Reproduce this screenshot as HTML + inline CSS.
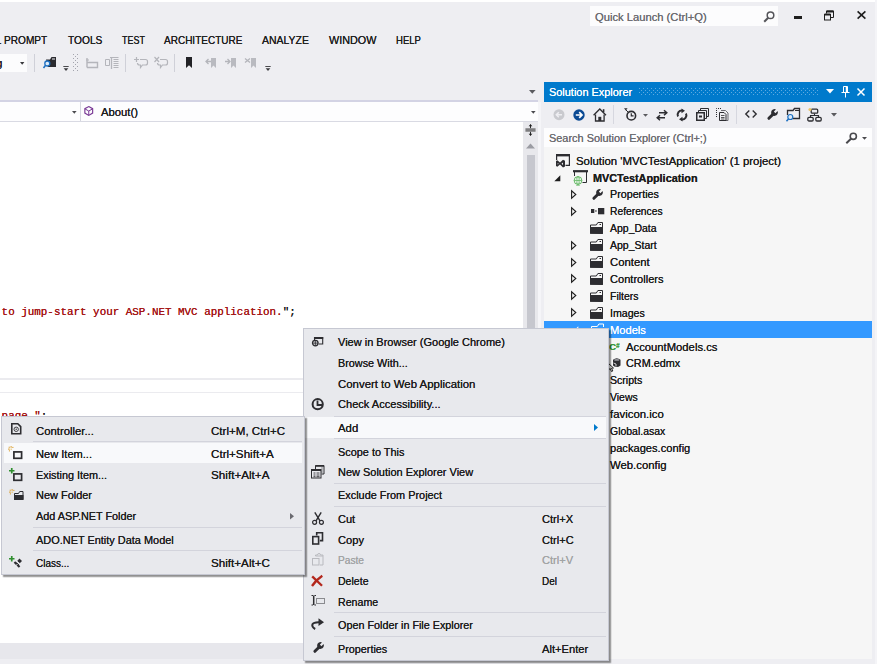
<!DOCTYPE html>
<html>
<head>
<meta charset="utf-8">
<title>MVCTestApplication - Microsoft Visual Studio</title>
<style>
html,body{margin:0;padding:0;}
body{width:879px;height:666px;overflow:hidden;background:#eeeef2;position:relative;
 font-family:"Liberation Sans",sans-serif;font-size:12px;color:#1e1e1e;}
.abs{position:absolute;}
.t{position:absolute;white-space:pre;line-height:16px;height:16px;font-size:11px;transform-origin:0 50%;text-shadow:0 0 0.400px currentColor;}
svg{position:absolute;overflow:visible;}
.mb{color:#1e1e1e;}
.tr{color:#1e1e1e;}
.menu{position:absolute;background:#e8e9ed;border:1px solid #c6c8d2;box-shadow:2.200px 2.200px 1.200px rgba(0,0,0,.43);box-sizing:border-box;}
.mi{color:#1e1e1e;}
.sep{position:absolute;height:1px;background:#d3d4dc;}
.hl{position:absolute;background:#f8f9fb;}
</style>
</head>
<body>

<!-- ===== top chrome ===== -->
<div class="abs" style="left:589.5px;top:6px;width:188px;height:20px;background:#fcfcfd;"></div>
<svg style="left:762.500px;top:10.500px" width="12" height="12" viewBox="0 0 12 12"><circle cx="7.500" cy="4.300" r="3.300" fill="none" stroke="#55555a" stroke-width="1.500"/><path d="M5.200 6.700 L1.200 10.800" stroke="#55555a" stroke-width="2"/></svg>
<div class="abs" style="left:793.500px;top:15.500px;width:8.500px;height:3px;background:#1e1e1e;"></div>
<svg style="left:823px;top:9.500px" width="12" height="12" viewBox="0 0 12 12"><path d="M3.5 3.5V1h7v6.5H8" fill="none" stroke="#1e1e1e" stroke-width="1"/><path d="M3.5 1.5h7" stroke="#1e1e1e" stroke-width="2"/><rect x="1.5" y="4.5" width="6" height="5.5" fill="none" stroke="#1e1e1e" stroke-width="1"/><path d="M1.5 4.5h6" stroke="#1e1e1e" stroke-width="2"/></svg>
<svg style="left:857px;top:11px" width="9" height="8" viewBox="0 0 9 8"><path d="M0.600 0.300l7.800 7.400M8.400 0.300l-7.800 7.400" stroke="#1e1e1e" stroke-width="1.600"/></svg>

<!-- toolbar -->
<div class="abs" style="left:0;top:54px;width:27px;height:18px;background:#fcfcfd;"></div>
<svg style="left:19.500px;top:62px" width="5" height="3"><path d="M0 0h4.400L2.200 2.800z" fill="#3a3a3e"/></svg>
<div class="abs" style="left:34px;top:54px;width:1px;height:18px;background:#cfd0d8;"></div>
<!-- find in files -->
<svg style="left:43px;top:56px" width="14" height="13" viewBox="0 0 14 13"><path d="M3 3.500h4l1.500-2.500h4.500v10h-8z" fill="#2b2b30"/><path d="M9 3h3" stroke="#eeeef2" stroke-width="1"/><circle cx="4.300" cy="7.500" r="2.500" fill="#dceaf8" stroke="#1d6fc0" stroke-width="1.300"/><path d="M2.600 9.300L0.500 12" stroke="#1d6fc0" stroke-width="1.600"/></svg>
<svg style="left:63px;top:65.500px" width="6" height="6" viewBox="0 0 6 6"><path d="M0.300 0.500h5.400" stroke="#4a4a4e" stroke-width="1"/><path d="M0.700 2.300h4.600L3 5z" fill="#3a3a3e"/></svg>
<svg style="left:73px;top:54px" width="5" height="18" viewBox="0 0 5 18"><g fill="#a3a4ad"><rect x="0" y="0" width="1" height="1"/><rect x="4" y="0" width="1" height="1"/><rect x="2" y="2" width="1" height="1"/><rect x="0" y="4" width="1" height="1"/><rect x="4" y="4" width="1" height="1"/><rect x="2" y="6" width="1" height="1"/><rect x="0" y="8" width="1" height="1"/><rect x="4" y="8" width="1" height="1"/><rect x="2" y="10" width="1" height="1"/><rect x="0" y="12" width="1" height="1"/><rect x="4" y="12" width="1" height="1"/><rect x="2" y="14" width="1" height="1"/><rect x="0" y="16" width="1" height="1"/><rect x="4" y="16" width="1" height="1"/></g></svg>
<!-- disabled icons -->
<svg style="left:86px;top:58px" width="12" height="10" viewBox="0 0 12 10"><path d="M1 0v9.500M1 4.500h10.500v5H1" fill="none" stroke="#b4b5bb" stroke-width="1.400"/><path d="M0 2h3" stroke="#b4b5bb" stroke-width="1"/></svg>
<svg style="left:105px;top:57px" width="14" height="12" viewBox="0 0 14 12"><path d="M0.500 2.500h4v6h-4z" fill="none" stroke="#b4b5bb" stroke-width="1"/><path d="M6.500 0v12" stroke="#b4b5bb" stroke-width="1.300"/><path d="M5 0.500h8.500M8.500 2.500h5M8.500 4.500h5M8.500 6.500h5M8.500 8.500h5M8.500 10.500h5" stroke="#b4b5bb" stroke-width="1"/></svg>
<div class="abs" style="left:125px;top:54px;width:1px;height:18px;background:#cfd0d8;"></div>
<svg style="left:134px;top:57px" width="14" height="12" viewBox="0 0 14 12"><path d="M2.500 0v5M0 2.500h5" stroke="#b4b5bb" stroke-width="1.200"/><path d="M6 2.500h5.500q2 0 2 2v1.500q0 2-2 2h-3l-2 2.500v-2.500h-1q-2 0-2-2" fill="none" stroke="#b4b5bb" stroke-width="1.200"/></svg>
<svg style="left:154px;top:57px" width="14" height="12" viewBox="0 0 14 12"><path d="M0.500 0l4.500 5M5 0L0.500 5" stroke="#b4b5bb" stroke-width="1.200"/><path d="M6 2.500h5.500q2 0 2 2v1.500q0 2-2 2h-3l-2 2.500v-2.500h-1q-2 0-2-2" fill="none" stroke="#b4b5bb" stroke-width="1.200"/></svg>
<div class="abs" style="left:174px;top:54px;width:1px;height:18px;background:#cfd0d8;"></div>
<svg style="left:186px;top:57px" width="6" height="11" viewBox="0 0 6 11"><path d="M0 0h6v11L3 8.300L0 11z" fill="#222226"/></svg>
<svg style="left:205px;top:57px" width="11" height="11" viewBox="0 0 11 11"><path d="M6 1h5v10l-2.500-2.500L6 11z" fill="#b9bac0"/><path d="M6 4.500H1M3.500 2L1 4.500L3.500 7" fill="none" stroke="#b4b5bb" stroke-width="1.300"/></svg>
<svg style="left:225px;top:57px" width="11" height="11" viewBox="0 0 11 11"><path d="M6 1h5v10l-2.500-2.500L6 11z" fill="#b9bac0"/><path d="M0 4.500H5M2.500 2L5 4.500L2.500 7" fill="none" stroke="#b4b5bb" stroke-width="1.300"/></svg>
<svg style="left:245px;top:57px" width="11" height="11" viewBox="0 0 11 11"><path d="M6 1h5v10l-2.500-2.500L6 11z" fill="#b9bac0"/><path d="M0 1.500L5 5.500M0 5.500L5 1.500" fill="none" stroke="#b4b5bb" stroke-width="1.300"/></svg>
<svg style="left:265px;top:66px" width="6" height="6" viewBox="0 0 6 6"><path d="M0.300 0.500h5.400" stroke="#4a4a4e" stroke-width="1"/><path d="M0.700 2.300h4.600L3 5z" fill="#3a3a3e"/></svg>

<!-- editor nav bar -->
<div class="abs" style="left:0;top:100px;width:538px;height:2px;background:#d3d3e4;"></div>
<div class="abs" style="left:0;top:102px;width:538px;height:19px;background:#fdfdfe;"></div>
<div class="abs" style="left:0;top:121px;width:538px;height:1px;background:#d9dae3;"></div>
<div class="abs" style="left:80px;top:102px;width:1px;height:19px;background:#d6d7e0;"></div>
<svg style="left:72.300px;top:111px" width="5" height="3"><path d="M0 0h4.600L2.300 2.800z" fill="#4a4a4e"/></svg>
<svg style="left:530.600px;top:111.200px" width="5" height="3"><path d="M0 0h4.600L2.300 2.800z" fill="#4a4a4e"/></svg>
<svg style="left:528.500px;top:90px" width="7" height="4"><path d="M0 0h6.600L3.300 3.800z" fill="#5a5a5e"/></svg>
<svg style="left:84px;top:105.500px" width="9.500" height="10" viewBox="0 0 9.500 10"><path d="M4.750 0.600l3.900 2.100v4.400L4.750 9.400 0.850 7.100v-4.400z" fill="none" stroke="#7a3a96" stroke-width="1.150"/><path d="M1 2.900L4.750 5l3.750-2.100M4.750 5v4.200" fill="none" stroke="#7a3a96" stroke-width="1"/></svg>

<!-- editor -->
<div class="abs" style="left:0;top:122px;width:523px;height:521px;background:#ffffff;"></div>
<div class="abs" style="left:523px;top:122px;width:15px;height:521px;background:#e8e8ec;"></div>
<div class="abs" style="left:538px;top:102px;width:3px;height:542px;background:#f5f5f8;"></div>
<div class="abs" style="left:527.300px;top:154.500px;width:7.700px;height:480px;background:#c6c7ce;"></div>
<svg style="left:526px;top:143px" width="10" height="6"><path d="M0 5.500L4.500 0.500L9 5.500z" fill="#9b9ca3"/></svg>
<svg style="left:525px;top:124.300px" width="11" height="12" viewBox="0 0 11 13"><path d="M0 5.500h11M0 7.500h11" stroke="#1e1e1e" stroke-width="1"/><path d="M5.500 0.500v4M5.500 8.500v4" stroke="#1e1e1e" stroke-width="1"/><path d="M3.500 2.500L5.500 0.300L7.500 2.500zM3.500 10.500L5.500 12.700L7.500 10.500z" fill="#1e1e1e"/></svg>
<div class="abs" style="left:0;top:643px;width:544px;height:16px;background:#e7e7ec;"></div>
<div class="abs" style="left:0;top:378px;width:523px;height:1.500px;background:#ebebef;"></div>
<div class="abs" style="left:0;top:391.500px;width:523px;height:1.500px;background:#ebebef;"></div>
<div class="t" id="code1" style="left:1.600px;top:304.300px;font-family:'Liberation Mono',monospace;font-size:10.900px;color:#a31515;">to jump-start your ASP.NET MVC application.<span style="color:#1e1e1e">";</span></div>
<div class="t" id="code2" style="left:1.600px;top:408.300px;font-family:'Liberation Mono',monospace;font-size:10.900px;color:#a31515;">page."<span style="color:#1e1e1e">;</span></div>

<!-- ===== Solution Explorer ===== -->
<div class="abs" style="left:544px;top:82px;width:328px;height:20px;background:#007acc;"></div>
<svg style="left:639px;top:88px" width="180" height="7"><defs><pattern id="dp" width="4" height="4" patternUnits="userSpaceOnUse"><rect x="0" y="0" width="1" height="1" fill="#5eaae0"/><rect x="2" y="2" width="1" height="1" fill="#5eaae0"/></pattern></defs><rect width="180" height="7" fill="url(#dp)"/></svg>
<svg style="left:826px;top:89px" width="9" height="6"><path d="M0 0h8L4 4.500z" fill="#fff"/></svg>
<svg style="left:841px;top:86px" width="9" height="12" viewBox="0 0 9 12"><path d="M2.500 0.500h4v6h-4zM0.500 6.500h8M4.500 6.500v5" fill="none" stroke="#fff" stroke-width="1"/><path d="M5.500 0.500v6" stroke="#fff" stroke-width="1.500"/></svg>
<svg style="left:857px;top:88px" width="8" height="8" viewBox="0 0 8 8"><path d="M0.500 0.500l7 7M7.500 0.500l-7 7" stroke="#fff" stroke-width="1.500"/></svg>
<div class="abs" style="left:544px;top:128px;width:328px;height:19px;background:#fdfdfe;"></div>
<div class="abs" style="left:544px;top:147px;width:328px;height:512px;background:#f6f6f6;"></div>
<div class="abs" style="left:544px;top:320.800px;width:328px;height:17.700px;background:#3399ff;"></div>
<svg style="left:845px;top:132px" width="13" height="12" viewBox="0 0 13 12"><circle cx="8.300" cy="4.300" r="3.100" fill="none" stroke="#4a4a4e" stroke-width="1.600"/><path d="M6 6.700L1.300 11.200" stroke="#4a4a4e" stroke-width="2"/></svg>
<svg style="left:862px;top:137px" width="5" height="3"><path d="M0 0h5L2.500 2.800z" fill="#4a4a4e"/></svg>
<svg style="left:552.5px;top:108.8px" width="12" height="12" viewBox="0 0 12 12"><circle cx="6" cy="5.700" r="5.500" fill="#c9cacf"/><path d="M9 5.700H3.500M5.800 3.200L3.300 5.700L5.800 8.200" fill="none" stroke="#eeeef2" stroke-width="1.500"/></svg>
<svg style="left:573px;top:108.6px" width="12" height="12" viewBox="0 0 12 12"><circle cx="6" cy="6" r="5.700" fill="#0b4a94"/><path d="M2.800 6H8.800M6.200 3.200L9 6L6.200 8.800" fill="none" stroke="#fff" stroke-width="1.700"/></svg>
<svg style="left:593px;top:108px" width="14" height="14" viewBox="0 0 14 14"><path d="M0.600 7.300L6.800 1L13 7.300" fill="none" stroke="#2d2d31" stroke-width="1.300"/><path d="M2.500 6.500V13h8.600V6.500" fill="none" stroke="#2d2d31" stroke-width="1.300"/><rect x="5.300" y="8.800" width="3" height="4.200" fill="#2d2d31"/><rect x="9.800" y="1.200" width="1.600" height="3" fill="#2d2d31"/></svg>
<div class="abs" style="left:613px;top:105px;width:1px;height:19px;background:#d6d7df;"></div>
<svg style="left:623.5px;top:108px" width="13" height="13" viewBox="0 0 13 13"><circle cx="7.300" cy="7.700" r="4.300" fill="none" stroke="#2d2d31" stroke-width="1.600"/><path d="M7.300 5.300V7.900H9.600" fill="none" stroke="#2d2d31" stroke-width="1.200"/><path d="M0 0.300h3.600L1.800 2.600z" fill="#2d2d31"/><path d="M2 2L4 4" stroke="#2d2d31" stroke-width="1"/></svg>
<svg style="left:643px;top:114px" width="5" height="3" viewBox="0 0 5 3"><path d="M0 0h5L2.500 2.800z" fill="#5a5a5e"/></svg>
<svg style="left:655.5px;top:109.5px" width="12" height="11" viewBox="0 0 12 11"><path d="M3 2.800H11M8 0.300L10.800 2.800L8 5.300" fill="none" stroke="#2d2d31" stroke-width="1.500"/><path d="M9 7.800H1M4 5.300L1.200 7.800L4 10.300" fill="none" stroke="#2d2d31" stroke-width="1.500"/></svg>
<svg style="left:675.5px;top:109px" width="12" height="12" viewBox="0 0 12 12"><path d="M2 7.500A4.200 4.200 0 0 1 6.500 1.600" fill="none" stroke="#2d2d31" stroke-width="2"/><path d="M5.500 -0.500L9 1.800L5.500 4.200z" fill="#2d2d31"/><path d="M10 4.500A4.200 4.200 0 0 1 5.500 10.400" fill="none" stroke="#2d2d31" stroke-width="2"/><path d="M6.500 12.500L3 10.200L6.500 7.800z" fill="#2d2d31"/></svg>
<svg style="left:696.4px;top:108px" width="13" height="13" viewBox="0 0 13 13"><path d="M4.500 2.500V0.500h8v8h-2" fill="none" stroke="#2d2d31" stroke-width="1"/><path d="M2.500 4.500V2.500h8v8h-2" fill="none" stroke="#2d2d31" stroke-width="1"/><rect x="0.750" y="4.750" width="7.500" height="7.500" fill="none" stroke="#2d2d31" stroke-width="1.500"/><rect x="3" y="7.500" width="3" height="2" fill="#2d2d31"/></svg>
<svg style="left:716.4px;top:108px" width="13" height="13" viewBox="0 0 13 13"><path d="M0.500 9V0.500H6" fill="none" stroke="#2d2d31" stroke-width="1" stroke-dasharray="1 1"/><path d="M5 2.500h4.500l2.500 2.500v7.500h-7" fill="none" stroke="#6a6a70" stroke-width="1"/><path d="M3.500 4.500h4.500l2 2v6h-6.500z" fill="#eeeef2" stroke="#2d2d31" stroke-width="1"/><path d="M5 7.500h3.500M5 9.500h3.500M5 11h3.500" stroke="#2d2d31" stroke-width="0.800"/></svg>
<div class="abs" style="left:736px;top:105px;width:1px;height:19px;background:#d6d7df;"></div>
<svg style="left:745px;top:110.4px" width="12" height="8" viewBox="0 0 12 8"><path d="M4.300 0.500L0.800 4L4.300 7.500M7.700 0.500L11.200 4L7.700 7.500" fill="none" stroke="#2d2d31" stroke-width="1.400"/></svg>
<svg style="left:766.5px;top:109px" width="11" height="11" viewBox="0 0 11 11"><g transform="scale(1)"><path d="M1.900 9.300L6 5.200" stroke="#2d2d31" stroke-width="3" stroke-linecap="round"/><path d="M10.550 2A3.400 3.400 0 1 1 9 0.450L6.860 2.580L8.420 4.140z" fill="#2d2d31"/></g></svg>
<svg style="left:785.5px;top:108px" width="14" height="14" viewBox="0 0 14 14"><path d="M1.500 7V2.500h5.500l1.500-2h5v10h-7" fill="none" stroke="#2d2d31" stroke-width="1.300"/><path d="M9 2.500h4" stroke="#2d2d31" stroke-width="1"/><circle cx="4.300" cy="9" r="2.500" fill="#dceaf8" stroke="#1d6fc0" stroke-width="1.200"/><path d="M2.600 10.800L0.500 13.300" stroke="#1d6fc0" stroke-width="1.500"/></svg>
<svg style="left:806.5px;top:108px" width="15" height="14" viewBox="0 0 15 14"><rect x="4.200" y="1.200" width="6.500" height="4" rx="1" fill="none" stroke="#2d2d31" stroke-width="1.300"/><rect x="0.800" y="9.300" width="5.400" height="3.700" rx="1.200" fill="none" stroke="#2d2d31" stroke-width="1.300"/><rect x="8.800" y="9.300" width="5.400" height="3.700" rx="1.200" fill="none" stroke="#2d2d31" stroke-width="1.300"/><path d="M7.500 5.500V7.500M3.500 9.300V7.500h8V9.300" fill="none" stroke="#2d2d31" stroke-width="1.100"/><circle cx="3" cy="1.500" r="1.600" fill="#e8c468"/></svg>
<svg style="left:831px;top:113.3px" width="6" height="4" viewBox="0 0 6 4"><path d="M0 0h6L3 3.400z" fill="#5a5a5e"/></svg>
<svg style="left:556px;top:154.05px" width="14" height="13" viewBox="0 0 14 13"><path d="M0.600 6V0.500h12.800V11.400H9.500" fill="none" stroke="#2d2d31" stroke-width="1.200"/><path d="M0 1.200h14" stroke="#2d2d31" stroke-width="2.400"/><path d="M0 7l1.300-0.800L4 8.600L7 5.800l2 0.900v5.800L7 13.400L4 10.600L1.300 12.800L0 12zM1.700 8.900v1.600l1-0.800zM7 8.400l-1.500 1.300L7 11z" fill="#2d2d31" fill-rule="evenodd"/></svg>
<svg style="left:554px;top:175.056px" width="7" height="7" viewBox="0 0 7 7"><path d="M6.300 0.300V6.300H0.300z" fill="#1e1e1e"/></svg>
<svg style="left:572.5px;top:170.056px" width="15" height="16" viewBox="0 0 15 16"><path d="M0 1.200h15" stroke="#2d2d31" stroke-width="2.200"/><path d="M1.500 2v4M13.500 2v10.500H9.500" fill="none" stroke="#2d2d31" stroke-width="1"/><circle cx="5" cy="10.500" r="3.900" fill="#ffffff" stroke="#55b055" stroke-width="0.900"/><path d="M1.100 10.500h7.800M5 6.600v7.800" stroke="#55b055" stroke-width="0.700"/><ellipse cx="5" cy="10.500" rx="1.900" ry="3.900" fill="none" stroke="#55b055" stroke-width="0.600"/><path d="M3.200 15.300h3.600" stroke="#55b055" stroke-width="0.700"/></svg>
<svg style="left:571px;top:189.962px" width="6" height="9" viewBox="0 0 6 9"><path d="M0.600 0.800V8.200L4.800 4.500z" fill="#f6f6f6" stroke="#1e1e1e" stroke-width="1.100"/></svg>
<svg style="left:592px;top:188.862px" width="11" height="11" viewBox="0 0 11 11"><g transform="scale(1)"><path d="M1.900 9.300L6 5.200" stroke="#2d2d31" stroke-width="3" stroke-linecap="round"/><path d="M10.550 2A3.400 3.400 0 1 1 9 0.450L6.860 2.580L8.420 4.140z" fill="#2d2d31"/></g></svg>
<svg style="left:571px;top:206.868px" width="6" height="9" viewBox="0 0 6 9"><path d="M0.600 0.800V8.200L4.800 4.500z" fill="#f6f6f6" stroke="#1e1e1e" stroke-width="1.100"/></svg>
<svg style="left:590.5px;top:207.968px" width="13.5" height="7" viewBox="0 0 13.5 7"><rect x="0" y="1" width="3.300" height="4" fill="#2d2d31"/><rect x="4" y="2.500" width="1.800" height="1" fill="#2d2d31"/><rect x="7" y="0" width="6.300" height="6.300" fill="#2d2d31"/></svg>
<svg style="left:590.3px;top:222.274px" width="13" height="12" viewBox="0 0 13 12"><path d="M0.5 11V3h5.800l1.600-2.500h4.600V11.500z" fill="none" stroke="#2d2d31" stroke-width="1"/><rect x="0" y="5" width="13" height="6.800" fill="#2d2d31"/><path d="M9.500 2.500h1.500" stroke="#2d2d31" stroke-width="1"/></svg>
<svg style="left:590.3px;top:239.18px" width="13" height="12" viewBox="0 0 13 12"><path d="M0.5 11V3h5.800l1.600-2.500h4.600V11.500z" fill="none" stroke="#2d2d31" stroke-width="1"/><rect x="0" y="5" width="13" height="6.800" fill="#2d2d31"/><path d="M9.500 2.500h1.500" stroke="#2d2d31" stroke-width="1"/></svg>
<svg style="left:571px;top:240.68px" width="6" height="9" viewBox="0 0 6 9"><path d="M0.600 0.800V8.200L4.800 4.500z" fill="#f6f6f6" stroke="#1e1e1e" stroke-width="1.100"/></svg>
<svg style="left:590.3px;top:256.086px" width="13" height="12" viewBox="0 0 13 12"><path d="M0.5 11V3h5.800l1.600-2.500h4.600V11.500z" fill="none" stroke="#2d2d31" stroke-width="1"/><rect x="0" y="5" width="13" height="6.800" fill="#2d2d31"/><path d="M9.500 2.500h1.500" stroke="#2d2d31" stroke-width="1"/></svg>
<svg style="left:571px;top:257.586px" width="6" height="9" viewBox="0 0 6 9"><path d="M0.600 0.800V8.200L4.800 4.500z" fill="#f6f6f6" stroke="#1e1e1e" stroke-width="1.100"/></svg>
<svg style="left:590.3px;top:272.992px" width="13" height="12" viewBox="0 0 13 12"><path d="M0.5 11V3h5.800l1.600-2.500h4.600V11.500z" fill="none" stroke="#2d2d31" stroke-width="1"/><rect x="0" y="5" width="13" height="6.800" fill="#2d2d31"/><path d="M9.500 2.500h1.500" stroke="#2d2d31" stroke-width="1"/></svg>
<svg style="left:571px;top:274.492px" width="6" height="9" viewBox="0 0 6 9"><path d="M0.600 0.800V8.200L4.800 4.500z" fill="#f6f6f6" stroke="#1e1e1e" stroke-width="1.100"/></svg>
<svg style="left:590.3px;top:289.898px" width="13" height="12" viewBox="0 0 13 12"><path d="M0.5 11V3h5.800l1.600-2.500h4.600V11.500z" fill="none" stroke="#2d2d31" stroke-width="1"/><rect x="0" y="5" width="13" height="6.800" fill="#2d2d31"/><path d="M9.500 2.500h1.500" stroke="#2d2d31" stroke-width="1"/></svg>
<svg style="left:571px;top:291.398px" width="6" height="9" viewBox="0 0 6 9"><path d="M0.600 0.800V8.200L4.800 4.500z" fill="#f6f6f6" stroke="#1e1e1e" stroke-width="1.100"/></svg>
<svg style="left:590.3px;top:306.804px" width="13" height="12" viewBox="0 0 13 12"><path d="M0.5 11V3h5.800l1.600-2.500h4.600V11.500z" fill="none" stroke="#2d2d31" stroke-width="1"/><rect x="0" y="5" width="13" height="6.800" fill="#2d2d31"/><path d="M9.500 2.500h1.500" stroke="#2d2d31" stroke-width="1"/></svg>
<svg style="left:571px;top:308.304px" width="6" height="9" viewBox="0 0 6 9"><path d="M0.600 0.800V8.200L4.800 4.500z" fill="#f6f6f6" stroke="#1e1e1e" stroke-width="1.100"/></svg>
<svg style="left:590.5px;top:323.01px" width="14" height="12" viewBox="0 0 14 12"><path d="M0.500 11V3.500h5.800l1.600-2.500h4.600V4" fill="none" stroke="#fff" stroke-width="1"/><path d="M0.500 11.500L3 5h11l-2.500 6.500z" fill="#fff"/></svg>
<svg style="left:571.5px;top:326.21px" width="7" height="7" viewBox="0 0 7 7"><path d="M6.300 0.300V6.300H0.300z" fill="#fff"/></svg>
<svg style="left:613px;top:357.522px" width="8" height="9.5" viewBox="0 0 8 9.5"><path d="M0 1.800Q3.750 -1.200 7.500 1.800V7.500Q3.750 10.500 0 7.500z" fill="#2d2d31"/><ellipse cx="3.750" cy="1.900" rx="2.700" ry="0.900" fill="#9a9aa0"/><path d="M0.500 5l2.500 1v2.500" fill="none" stroke="#f6f6f6" stroke-width="0.800"/></svg>
<svg style="left:607.5px;top:362.5px" width="6" height="9" viewBox="0 0 6 9"><path d="M0.500 0.500V7L2.200 5.500L3.500 8.500L4.800 8L3.500 5L5.500 5z" fill="#fff" stroke="#111" stroke-width="0.900"/></svg>
<div class="t" style="left:609.300px;top:338.700px;font-size:9.500px;font-weight:bold;color:#3c9a3c;">C<span style="font-size:6.500px;position:relative;top:-1.800px;left:-0.300px;">#</span></div>

<div class="t mb" style="left:-4.6px;top:31.9px;transform:scaleX(1.045);">L</div>
<div class="t mb" style="left:4.4px;top:31.9px;transform:scaleX(0.918);">PROMPT</div>
<div class="t mb" style="left:67.9px;top:31.9px;transform:scaleX(0.927);">TOOLS</div>
<div class="t mb" style="left:121.9px;top:31.9px;transform:scaleX(0.814);">TEST</div>
<div class="t mb" style="left:164.4px;top:31.9px;transform:scaleX(0.910);">ARCHITECTURE</div>
<div class="t mb" style="left:262.4px;top:31.9px;transform:scaleX(0.951);">ANALYZE</div>
<div class="t mb" style="left:328.9px;top:31.9px;transform:scaleX(0.982);">WINDOW</div>
<div class="t mb" style="left:395.9px;top:31.9px;transform:scaleX(0.866);">HELP</div>
<div class="t" style="left:594.6px;top:8.8px;transform:scaleX(1.018);color:#6d6d72;">Quick Launch (Ctrl+Q)</div>
<div class="t" style="left:-3.6px;top:54.6px;transform:scaleX(1.045);">g</div>
<div class="t" style="left:101.1px;top:103.9px;transform:scaleX(1.026);">About()</div>
<div class="t" style="left:548.6px;top:84.1px;transform:scaleX(0.993);color:#fff;">Solution Explorer</div>
<div class="t" style="left:549.0px;top:130.1px;transform:scaleX(0.993);color:#6d6d72;">Search Solution Explorer (Ctrl+;)</div>
<div class="t tr" style="left:575.5px;top:152.5px;transform:scaleX(1.035);">Solution 'MVCTestApplication' (1 project)</div>
<div class="t tr" style="left:592.6px;top:169.5px;transform:scaleX(0.985);font-weight:bold;text-shadow:0 0 0.300px currentColor;">MVCTestApplication</div>
<div class="t tr" style="left:609.6px;top:186.4px;transform:scaleX(0.975);">Properties</div>
<div class="t tr" style="left:609.6px;top:203.3px;transform:scaleX(0.935);">References</div>
<div class="t tr" style="left:609.6px;top:220.2px;transform:scaleX(0.952);">App_Data</div>
<div class="t tr" style="left:609.6px;top:237.1px;transform:scaleX(0.955);">App_Start</div>
<div class="t tr" style="left:609.6px;top:254.0px;transform:scaleX(1.028);">Content</div>
<div class="t tr" style="left:609.6px;top:270.9px;transform:scaleX(1.008);">Controllers</div>
<div class="t tr" style="left:609.6px;top:287.8px;transform:scaleX(0.951);">Filters</div>
<div class="t tr" style="left:609.6px;top:304.7px;transform:scaleX(0.965);">Images</div>
<div class="t tr" style="left:609.5px;top:321.6px;transform:scaleX(1.012);color:#fff;">Models</div>
<div class="t tr" style="left:626.4px;top:338.5px;transform:scaleX(1.024);">AccountModels.cs</div>
<div class="t tr" style="left:626.4px;top:355.4px;transform:scaleX(0.985);">CRM.edmx</div>
<div class="t tr" style="left:609.5px;top:372.3px;transform:scaleX(0.961);">Scripts</div>
<div class="t tr" style="left:609.5px;top:389.2px;transform:scaleX(0.950);">Views</div>
<div class="t tr" style="left:609.5px;top:406.1px;transform:scaleX(1.035);">favicon.ico</div>
<div class="t tr" style="left:609.5px;top:423.0px;transform:scaleX(0.952);">Global.asax</div>
<div class="t tr" style="left:609.5px;top:440.0px;transform:scaleX(1.010);">packages.config</div>
<div class="t tr" style="left:609.5px;top:456.9px;transform:scaleX(1.030);">Web.config</div>

<!-- ===== context menu ===== -->
<div class="menu" style="left:302.800px;top:328px;width:306px;height:332.700px;"></div>
<div class="hl" style="left:305px;top:417px;width:301px;height:21px;"></div>
<div class="sep" style="left:334px;top:416px;width:272px;"></div>
<div class="sep" style="left:334px;top:438px;width:272px;"></div>
<div class="sep" style="left:334px;top:483px;width:272px;"></div>
<div class="sep" style="left:334px;top:506px;width:272px;"></div>
<div class="sep" style="left:334px;top:612px;width:272px;"></div>
<div class="sep" style="left:334px;top:636px;width:272px;"></div>
<svg style="left:594px;top:424px" width="4" height="7"><path d="M0 0L4 3.500L0 7z" fill="#007acc"/></svg>
<svg style="left:312px;top:336.5px" width="12" height="10" viewBox="0 0 12 10"><path d="M2.500 3V0.500h8.200v6.500H7" fill="none" stroke="#2d2d31" stroke-width="1.100"/><path d="M2 1h9.200" stroke="#2d2d31" stroke-width="2"/><circle cx="3.300" cy="6.100" r="2.800" fill="#e8e9ed" stroke="#2d2d31" stroke-width="1.300"/><path d="M0.500 6.100h5.600M3.300 3.300v5.600" stroke="#2d2d31" stroke-width="0.900"/></svg>
<svg style="left:311px;top:397.6px" width="13.5" height="12.5" viewBox="0 0 13.5 12.5"><circle cx="6.700" cy="6.200" r="5.100" fill="none" stroke="#2d2d31" stroke-width="2"/><path d="M6.500 2.500V7h4.500" fill="none" stroke="#2d2d31" stroke-width="1.800"/></svg>
<svg style="left:311px;top:464.5px" width="14" height="13.5" viewBox="0 0 14 13.5"><path d="M4.500 4V0.500h8.500v8.500h-2.500" fill="none" stroke="#2d2d31" stroke-width="1"/><path d="M4.500 1h8.500" stroke="#2d2d31" stroke-width="1.600"/><path d="M11 2.500v5" stroke="#2d2d31" stroke-width="1" stroke-dasharray="1 1"/><rect x="0.500" y="4.500" width="9.500" height="8.500" fill="#e9eaee" stroke="#2d2d31" stroke-width="1"/><path d="M0.500 5.200h9.500" stroke="#2d2d31" stroke-width="1.600"/><path d="M2.500 8h2M5.500 8h3M2.500 10h2M5.500 10h3M2.500 11.700h2M5.500 11.700h3" stroke="#2d2d31" stroke-width="0.900"/></svg>
<svg style="left:312px;top:512px" width="12" height="13" viewBox="0 0 12 13"><path d="M2.800 0.300L8 8.800M9.200 0.300L4 8.800" fill="none" stroke="#2d2d31" stroke-width="1.400"/><circle cx="2.600" cy="10.300" r="2" fill="none" stroke="#2d2d31" stroke-width="1.200"/><circle cx="9.400" cy="10.300" r="2" fill="none" stroke="#2d2d31" stroke-width="1.200"/></svg>
<svg style="left:312px;top:532.3px" width="12" height="13" viewBox="0 0 12 13"><path d="M4.700 3.500V0.800h5.800v7.800h-2.700" fill="none" stroke="#2d2d31" stroke-width="1.600"/><rect x="0.800" y="4.600" width="5.800" height="7.400" fill="none" stroke="#2d2d31" stroke-width="1.600"/></svg>
<svg style="left:312px;top:553.3px" width="12" height="12.5" viewBox="0 0 12 12.5"><path d="M3.500 3V2h2q0-1.500 1.500-1.500T8.500 2h2.500v10h-3" fill="none" stroke="#b9babf" stroke-width="1"/><rect x="0.500" y="5.500" width="6.500" height="6.500" fill="none" stroke="#b9babf" stroke-width="1"/><path d="M3.500 3h7.500" stroke="#b9babf" stroke-width="1"/></svg>
<svg style="left:311px;top:575.3px" width="12.5" height="11.8" viewBox="0 0 12.5 11.8"><path d="M1.200 1.300L11 10.800" stroke="#b3271c" stroke-width="2.300"/><path d="M11.300 0.800Q5 5 1 11" fill="none" stroke="#b3271c" stroke-width="2.300"/></svg>
<svg style="left:311px;top:595px" width="14" height="11" viewBox="0 0 14 11"><path d="M0.500 0.500h1.500M3.500 0.500h1.500M0.500 10h1.500M3.500 10h1.500" stroke="#2d2d31" stroke-width="1"/><path d="M2.700 0.500v9.500" stroke="#2d2d31" stroke-width="1.500"/><rect x="5.500" y="3.500" width="8" height="5" fill="none" stroke="#2d2d31" stroke-width="1" stroke-dasharray="1 1"/></svg>
<svg style="left:311px;top:617.8px" width="13.5" height="12" viewBox="0 0 13.5 12"><path d="M4.200 11Q0.500 9 1.500 6.200Q2.800 3.800 9 4.200" fill="none" stroke="#2d2d31" stroke-width="2"/><path d="M7.500 0.300L13 4.200L7.500 8z" fill="#2d2d31"/></svg>
<svg style="left:312.8px;top:641.8px" width="11" height="11" viewBox="0 0 11 11"><g transform="scale(1)"><path d="M1.900 9.300L6 5.200" stroke="#2d2d31" stroke-width="3" stroke-linecap="round"/><path d="M10.550 2A3.400 3.400 0 1 1 9 0.450L6.860 2.580L8.420 4.140z" fill="#2d2d31"/></g></svg>
<div class="t mi" style="left:337.6px;top:334.4px;transform:scaleX(1.001);">View in Browser (Google Chrome)</div>
<div class="t mi" style="left:337.6px;top:355.1px;transform:scaleX(0.983);">Browse With...</div>
<div class="t mi" style="left:337.6px;top:375.7px;transform:scaleX(1.037);">Convert to Web Application</div>
<div class="t mi" style="left:337.6px;top:396.4px;transform:scaleX(1.007);">Check Accessibility...</div>
<div class="t mi" style="left:337.6px;top:419.6px;transform:scaleX(1.032);">Add</div>
<div class="t mi" style="left:337.6px;top:443.5px;transform:scaleX(0.990);">Scope to This</div>
<div class="t mi" style="left:337.6px;top:464.1px;transform:scaleX(0.997);">New Solution Explorer View</div>
<div class="t mi" style="left:337.6px;top:487.3px;transform:scaleX(0.990);">Exclude From Project</div>
<div class="t mi" style="left:337.6px;top:510.8px;transform:scaleX(1.004);">Cut</div>
<div class="t mi" style="left:541.9px;top:510.8px;transform:scaleX(1.011);">Ctrl+X</div>
<div class="t mi" style="left:337.6px;top:531.5px;transform:scaleX(1.012);">Copy</div>
<div class="t mi" style="left:541.9px;top:531.5px;transform:scaleX(1.007);">Ctrl+C</div>
<div class="t mi" style="left:337.6px;top:552.3px;transform:scaleX(0.924);color:#a2a4a5;">Paste</div>
<div class="t mi" style="left:541.9px;top:552.3px;transform:scaleX(1.011);color:#a2a4a5;">Ctrl+V</div>
<div class="t mi" style="left:337.6px;top:573.1px;transform:scaleX(0.959);">Delete</div>
<div class="t mi" style="left:541.9px;top:573.1px;transform:scaleX(0.902);">Del</div>
<div class="t mi" style="left:337.6px;top:593.7px;transform:scaleX(0.967);">Rename</div>
<div class="t mi" style="left:337.6px;top:617.3px;transform:scaleX(0.981);">Open Folder in File Explorer</div>
<div class="t mi" style="left:337.6px;top:640.6px;transform:scaleX(0.981);">Properties</div>
<div class="t mi" style="left:541.9px;top:640.6px;transform:scaleX(1.016);">Alt+Enter</div>

<!-- ===== sub menu ===== -->
<div class="menu" style="left:1px;top:416px;width:304px;height:159px;"></div>
<div class="hl" style="left:4px;top:443px;width:298px;height:20px;"></div>
<div class="sep" style="left:33px;top:441px;width:269px;"></div>
<div class="sep" style="left:33px;top:527px;width:269px;"></div>
<div class="sep" style="left:33px;top:550px;width:269px;"></div>
<svg style="left:290px;top:513px" width="4" height="7"><path d="M0 0L4 3.300L0 6.600z" fill="#6a6a70"/></svg>
<svg style="left:11.4px;top:423.4px" width="10.5" height="11.5" viewBox="0 0 10.5 11.5"><path d="M0.800 0.800h6l2.900 2.900v7H0.800z" fill="none" stroke="#2d2d31" stroke-width="1.600"/><circle cx="5.200" cy="6.300" r="2.200" fill="none" stroke="#2d2d31" stroke-width="0.900"/><circle cx="5.200" cy="6.300" r="0.700" fill="#2d2d31"/></svg>
<svg style="left:8px;top:446px" width="6" height="6" viewBox="0 0 6 6"><g fill="#dba032"><rect x="2.600" y="0" width="1" height="1.800"/><rect x="0" y="2.600" width="1.800" height="1"/><rect x="0.700" y="0.700" width="1.100" height="1.100"/><rect x="4.300" y="0.900" width="1.100" height="1.100"/><rect x="0.900" y="4.300" width="1.100" height="1.100"/><rect x="2.600" y="2.600" width="1.200" height="1.200" fill="#e8bf66"/></g></svg>
<svg style="left:13px;top:451.4px" width="9.5" height="8" viewBox="0 0 9.5 8"><rect x="0.900" y="0.900" width="7.700" height="6.400" fill="none" stroke="#2d2d31" stroke-width="1.700"/></svg>
<svg style="left:9px;top:468.2px" width="5.5" height="5.5" viewBox="0 0 5.5 5.5"><path d="M2.750 0v5.500M0 2.750h5.500" stroke="#2f8f2f" stroke-width="1.700"/></svg>
<svg style="left:13px;top:472.6px" width="9.5" height="8" viewBox="0 0 9.5 8"><rect x="0.900" y="0.900" width="7.700" height="6.400" fill="none" stroke="#2d2d31" stroke-width="1.700"/></svg>
<svg style="left:9px;top:488.5px" width="6" height="6" viewBox="0 0 6 6"><g fill="#dba032"><rect x="2.600" y="0" width="1" height="1.800"/><rect x="0" y="2.600" width="1.800" height="1"/><rect x="0.700" y="0.700" width="1.100" height="1.100"/><rect x="4.300" y="0.900" width="1.100" height="1.100"/><rect x="0.900" y="4.300" width="1.100" height="1.100"/><rect x="2.600" y="2.600" width="1.200" height="1.200" fill="#e8bf66"/></g></svg>
<svg style="left:13.5px;top:491.2px" width="9.5" height="9" viewBox="0 0 9.5 9"><path d="M0.500 8V2.500h4l1.200-2h3.300V8.500z" fill="none" stroke="#2d2d31" stroke-width="1"/><rect x="0" y="4" width="9.500" height="5" fill="#2d2d31"/></svg>
<svg style="left:9.2px;top:556.2px" width="5.5" height="5.5" viewBox="0 0 5.5 5.5"><path d="M2.750 0v5.500M0 2.750h5.500" stroke="#2f8f2f" stroke-width="1.700"/></svg>
<svg style="left:12.8px;top:558.2px" width="9.5" height="9.5" viewBox="0 0 9.5 9.5"><path d="M6.500 0.500l2.500 2.500-2.200 2.200L4.300 2.700zM2.200 3.200l2.300 2.300-1.500 1.500L0.700 4.700zM5 6l2.300 2.300-1.500 1.500L3.500 7.500z" fill="#2d2d31"/><path d="M3.500 4.500L6 7M5 4l1-1" stroke="#2d2d31" stroke-width="0.900"/></svg>
<div class="t mi" style="left:35.8px;top:422.6px;transform:scaleX(1.028);">Controller...</div>
<div class="t mi" style="left:210.6px;top:422.6px;transform:scaleX(1.053);">Ctrl+M, Ctrl+C</div>
<div class="t mi" style="left:35.8px;top:445.8px;transform:scaleX(1.007);">New Item...</div>
<div class="t mi" style="left:210.6px;top:445.8px;transform:scaleX(1.057);">Ctrl+Shift+A</div>
<div class="t mi" style="left:35.8px;top:466.8px;transform:scaleX(0.986);">Existing Item...</div>
<div class="t mi" style="left:210.6px;top:466.8px;transform:scaleX(1.063);">Shift+Alt+A</div>
<div class="t mi" style="left:35.8px;top:487.4px;transform:scaleX(0.996);">New Folder</div>
<div class="t mi" style="left:35.8px;top:508.1px;transform:scaleX(0.985);">Add ASP.NET Folder</div>
<div class="t mi" style="left:35.8px;top:531.7px;transform:scaleX(0.994);">ADO.NET Entity Data Model</div>
<div class="t mi" style="left:35.8px;top:555.3px;transform:scaleX(0.905);">Class...</div>
<div class="t mi" style="left:210.6px;top:555.3px;transform:scaleX(1.059);">Shift+Alt+C</div>

<div class="abs" style="left:0;top:0;width:879px;height:2px;background:#fff;"></div>
<div class="abs" style="left:875px;top:0;width:2px;height:666px;background:#f4f4f7;"></div>
<div class="abs" style="left:877px;top:0;width:2px;height:666px;background:#fff;"></div>
<div class="abs" style="left:0;top:664px;width:879px;height:2px;background:#fff;"></div>
</body>
</html>
